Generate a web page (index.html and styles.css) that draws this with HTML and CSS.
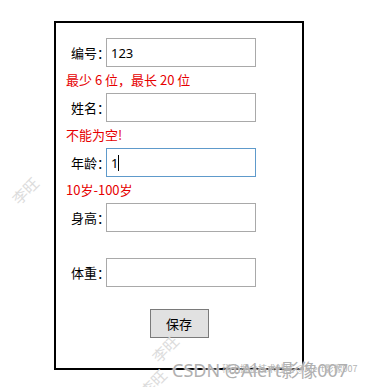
FILE: index.html
```html
<!DOCTYPE html>
<html lang="zh-CN">
<head>
    <meta charset="UTF-8">
    <meta name="viewport" content="width=device-width, initial-scale=1.0">
    <title>表单验证</title>
    <link rel="stylesheet" href="styles.css">
</head>
<body>

<div id="form-box">
    <div class="row">
        <label>编号：</label>
        <input type="text" class="field" value="123">
    </div>
    <div class="error">最少 6 位，最长 20 位</div>

    <div class="row">
        <label>姓名：</label>
        <input type="text" class="field">
    </div>
    <div class="error">不能为空!</div>

    <div class="row">
        <label>年龄：</label>
        <span class="field-wrap">
            <input type="text" class="field focused" value="1">
            <span class="caret"></span>
        </span>
    </div>
    <div class="error">10岁-100岁</div>

    <div class="row">
        <label>身高：</label>
        <input type="text" class="field">
    </div>
    <div class="error"></div>

    <div class="row">
        <label>体重：</label>
        <input type="text" class="field">
    </div>

    <div class="actions">
        <button class="save">保存</button>
    </div>
</div>

<div class="mark mark-1">李旺</div>
<div class="mark mark-2">李旺</div>
<div class="mark mark-3">李旺</div>
<div class="csdn">CSDN @Alert影像007</div>
<div class="csdn-small">稀土掘金技术社区 @Alert影像007</div>

</body>
</html>
```

FILE: styles.css
```css
body {
    margin: 0;
    font-family: "Noto Sans CJK SC", "Noto Sans", sans-serif;
    font-size: 13px;
    color: #000;
    background-color: #fff;
    position: relative;
    height: 387px;
    overflow: hidden;
}
#form-box {
    width: 226px;
    margin: 21px 0 0 54px;
    padding: 15px 10px 30px;
    border: 2px solid #000;
}
.row {
    display: flex;
    align-items: center;
    height: 29px;
    padding-left: 5px;
}
.row label {
    width: 35px;
    white-space: nowrap;
}
.field {
    box-sizing: border-box;
    width: 150px;
    height: 29px;
    padding: 0 4px;
    border: 1px solid #a9a9a9;
    font-family: "Noto Sans", "Noto Sans CJK SC", sans-serif;
    font-size: 13px;
    color: #000;
    outline: none;
}
.field.focused {
    border-color: #5e9acb;
}
.field-wrap {
    position: relative;
    display: inline-block;
    height: 29px;
}
.caret {
    position: absolute;
    left: 12px;
    top: 7px;
    width: 1px;
    height: 16px;
    background-color: #000;
}
.error {
    height: 26px;
    line-height: 26px;
    color: #e60000;
}
.actions {
    display: flex;
    justify-content: center;
    margin-top: 22px;
}
.save {
    width: 59px;
    height: 29px;
    border: 1px solid #7a7a7a;
    background-color: #e1e1e1;
    font-family: "Noto Sans CJK SC", sans-serif;
    font-size: 13px;
    color: #000;
    padding: 0;
}
.mark {
    position: absolute;
    color: #dcdcdc;
    font-size: 15px;
    transform: rotate(-45deg);
    white-space: nowrap;
}
.mark-1 {
    left: 10px;
    top: 180px;
}
.mark-2 {
    left: 150px;
    top: 338px;
}
.mark-3 {
    left: 138px;
    top: 372px;
}
.csdn {
    position: absolute;
    left: 172px;
    top: 356px;
    font-family: "Noto Sans", "Noto Sans CJK SC", sans-serif;
    font-size: 18px;
    color: #b0b0b0;
    text-shadow: 0 0 2px #fff, 0 0 2px #fff;
    white-space: nowrap;
}
.csdn-small {
    position: absolute;
    left: 222px;
    top: 362px;
    font-size: 9px;
    color: #b4b4b4;
    white-space: nowrap;
}
```
